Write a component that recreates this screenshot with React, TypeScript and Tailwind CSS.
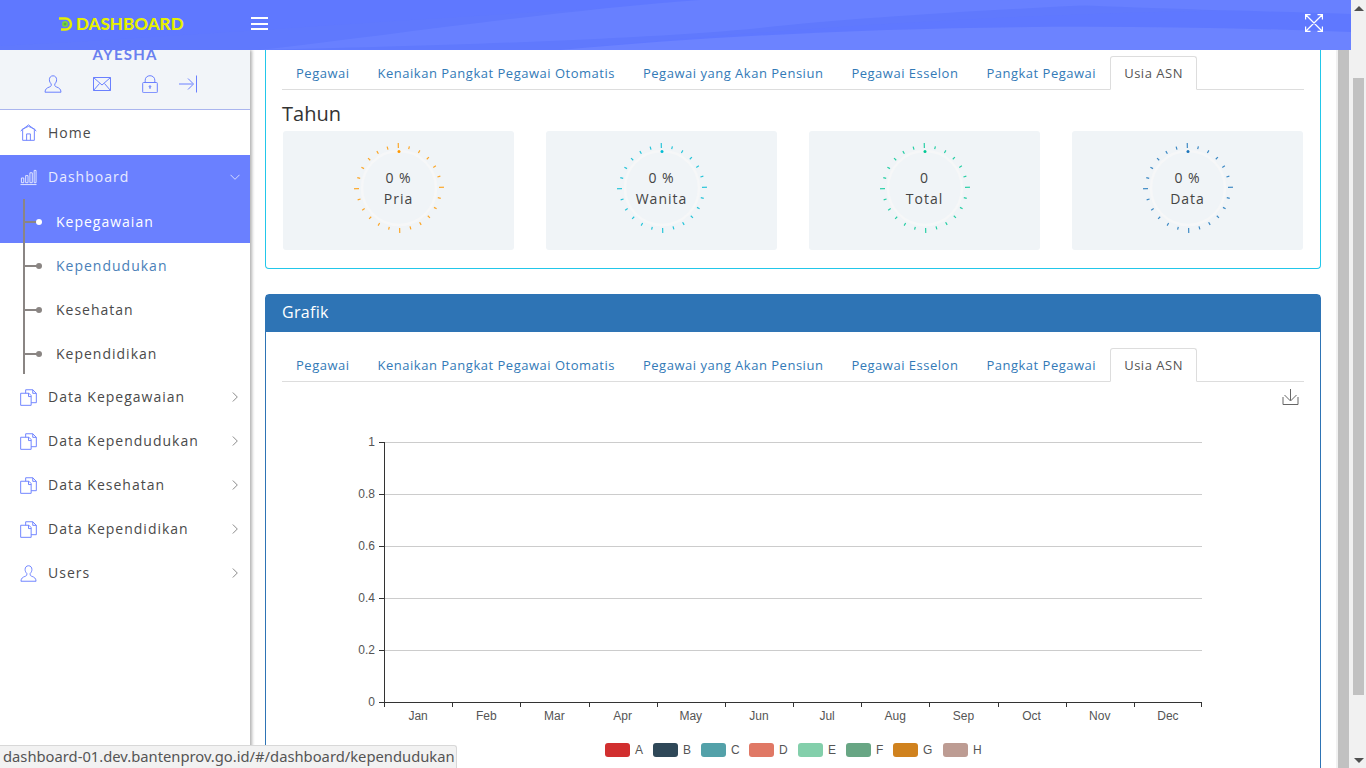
import type { ReactNode } from "react";

const TABS = [
  "Pegawai",
  "Kenaikan Pangkat Pegawai Otomatis",
  "Pegawai yang Akan Pensiun",
  "Pegawai Esselon",
  "Pangkat Pegawai",
  "Usia ASN",
];
const MONTHS = ["Jan", "Feb", "Mar", "Apr", "May", "Jun", "Jul", "Aug", "Sep", "Oct", "Nov", "Dec"];
const LEGEND = [
  { name: "A", x: 605, color: "#d12f2f" },
  { name: "B", x: 653, color: "#2f4858" },
  { name: "C", x: 701, color: "#53a1a9" },
  { name: "D", x: 749, color: "#e07865" },
  { name: "E", x: 798, color: "#83cfab" },
  { name: "F", x: 846, color: "#68a684" },
  { name: "G", x: 893, color: "#d0821e" },
  { name: "H", x: 943, color: "#bd9c93" },
];
const GAUGES = [
  { value: "0 %", label: "Pria", color: "#ff9800" },
  { value: "0 %", label: "Wanita", color: "#00bcd4" },
  { value: "0", label: "Total", color: "#00c896" },
  { value: "0 %", label: "Data", color: "#1b75bb" },
];

function Ico({ children, w = 18, h = 18, color = "#6a80ff", className = "" }: { children: ReactNode; w?: number; h?: number; color?: string; className?: string }) {
  return (
    <svg width={w} height={h} viewBox="0 0 18 18" fill="none" stroke={color} strokeWidth="1" className={`shrink-0 ${className}`}>
      {children}
    </svg>
  );
}

const USER_D = "M9 .8c-2.300 0-3.600 1.700-3.600 3.900 0 1.800.8 3.300 1.800 4.200v1.600c0 .7-.8 1.100-2 1.600-2.200.8-4 1.700-4.200 5.100h16c-.2-3.400-2-4.300-4.200-5.100-1.200-.5-2-.9-2-1.600V8.900c1-.9 1.800-2.400 1.800-4.200C12.600 2.500 11.300.8 9 .8z";
const CHART_D = "M.5 16.500h17M1.500 9.500h2.500v5H1.500zM6 7h2.500v7.500H6zM10.500 4h2.500v10.500h-2.500zM15 1.500h2v13h-2z";

const MailIcon = () => (
  <Ico className="ml-[31px]">
    <path d="M.5 2.500h17v13H.5zM.5 2.500 9 10l8.500-7.500M.5 15.500l6-7M17.500 15.500l-6-7" />
  </Ico>
);
const LockIcon = () => (
  <Ico className="ml-[30px]">
    <path d="M2.500 7.500h13a.8.8 0 0 1 .8.8v8.600a.8.8 0 0 1-.8.8h-13a.8.8 0 0 1-.8-.8V8.300a.8.8 0 0 1 .8-.8zM4.200 7.500V5.200C4.200 2.500 6.300.7 9 .7s4.800 1.800 4.800 4.500v2.300M9 11.500v2.500" />
    <circle cx="9" cy="11.500" r=".8" />
  </Ico>
);
const ExitIcon = () => (
  <Ico className="ml-[20px]">
    <path d="M17.500.5v17M0 9h13.500M9 3.500 14.500 9 9 14.500" />
  </Ico>
);
const HomeIcon = () => (
  <Ico w={17} h={17}>
    <path d="M.7 7.500 9 .9l8.300 6.600M2.800 6.500v10.800h12.400V6.500M7 17.300v-6.800h4v6.800" />
    <path d="M1.800 5.800 9 2.500l7.200 3.300" />
  </Ico>
);
const FilesIcon = () => (
  <Ico w={17} h={17}>
    <path d="M.7 4.500h8.800l2.300 2.500v10.300H.7zM6 4.500V.8h7.500l3.800 3.800v9.900h-5.500M13.500.8v3.800h3.800M9 4.500V8h2.800" />
  </Ico>
);

function Chevron({ down, color = "#8a8a8a" }: { down?: boolean; color?: string }) {
  return (
    <svg width="10" height="10" viewBox="0 0 10 10" fill="none" stroke={color} strokeWidth="1" className="shrink-0">
      <path d={down ? "M.5 2.800 5 7.300l4.500-4.500" : "M2.800.5 7.300 5 2.800 9.500"} />
    </svg>
  );
}

function NavItem({ icon, label, tall, active, chevron }: { icon: ReactNode; label: string; tall?: boolean; active?: boolean; chevron?: boolean }) {
  return (
    <div className={`flex items-center gap-[11px] pl-5 pr-[10px] ${tall ? "h-[45px]" : "h-[44px]"} ${active ? "text-[#e8ebff]" : "text-[#4a4a4a]"}`}>
      {icon}
      <span className={`flex-1 ${tall ? "" : "pb-0.5"}`}>{label}</span>
      {chevron && <Chevron down={active} color={active ? "#d5dbff" : "#8a8a8a"} />}
    </div>
  );
}

function SubItem({ label, className, dot }: { label: string; className: string; dot: string }) {
  return (
    <div className={`relative flex h-[44px] items-center pl-14 ${className}`}>
      <span className="absolute left-[25px] top-[22px] h-0.5 w-[12px] bg-[#8a8583]" />
      <span className={`absolute left-[36px] top-5 size-[6px] rounded-full ${dot}`} />
      {label}
    </div>
  );
}

function Sidebar() {
  return (
    <aside className="relative z-10 w-[250px] shrink-0 bg-white font-['Open_Sans',sans-serif] text-[14px] tracking-[1px] shadow-[2px_0_3px_rgba(0,0,0,0.3)]">
      <div className="flex h-[60px] flex-col border-b border-[#aab5ef] bg-[#f2f5f9]">
        <div className="-mt-1 h-[17px] text-center font-['Lato',sans-serif] text-[15px] font-bold leading-[17px] tracking-[1.2px] text-[#6a80f0]">AYESHA</div>
        <div className="mt-3 flex items-center pl-11">
          <Ico><path d={USER_D} /></Ico>
          <MailIcon />
          <LockIcon />
          <ExitIcon />
        </div>
      </div>
      <NavItem icon={<HomeIcon />} label="Home" tall />
      <div className="bg-[#6a80ff]">
        <NavItem icon={<Ico w={17} h={17} color="#e8ebff"><path d={CHART_D} /></Ico>} label="Dashboard" active chevron />
      </div>
      <div className="relative">
        <span className="absolute left-[23px] top-0 z-10 h-[175px] w-0.5 bg-[#8a8583]" />
        <SubItem label="Kepegawaian" className="bg-[#6a80ff] text-white" dot="bg-white" />
        <SubItem label="Kependudukan" className="text-[#4a80b8]" dot="bg-[#8a8583]" />
        <SubItem label="Kesehatan" className="text-[#4a4a4a]" dot="bg-[#8a8583]" />
        <SubItem label="Kependidikan" className="text-[#4a4a4a]" dot="bg-[#8a8583]" />
      </div>
      <NavItem icon={<FilesIcon />} label="Data Kepegawaian" chevron />
      <NavItem icon={<FilesIcon />} label="Data Kependudukan" chevron />
      <NavItem icon={<FilesIcon />} label="Data Kesehatan" chevron />
      <NavItem icon={<FilesIcon />} label="Data Kependidikan" chevron />
      <NavItem icon={<Ico w={17} h={17}><path d={USER_D} /></Ico>} label="Users" chevron />
    </aside>
  );
}

function Tabs() {
  return (
    <div className="flex h-[34px] border-b border-[#ddd] font-['Open_Sans',sans-serif] text-[13px] tracking-[0.51px]">
      {TABS.map((t) =>
        t === "Usia ASN" ? (
          <div key={t} className="flex h-[34px] items-center rounded-t-[3px] border border-[#ddd] border-b-white bg-white px-[13px] pt-0.5 text-[#555]">
            {t}
          </div>
        ) : (
          <div key={t} className="flex h-[33px] items-center border border-transparent px-[13px] pt-0.5 text-[#337ab7]">
            {t}
          </div>
        ),
      )}
    </div>
  );
}

function Gauge({ value, label, color }: { value: string; label: string; color: string }) {
  const ticks = Array.from({ length: 24 }, (_, i) => i);
  return (
    <div className="flex h-[119px] justify-center rounded-[3px] bg-[#f0f4f7] pt-[7px]">
      <div className="relative size-[100px]">
        <svg width="100" height="100" viewBox="0 0 100 100">
          <circle cx="50" cy="50" r="37" fill="none" stroke="#f6f7f8" strokeWidth="2.500" />
          <circle cx="50" cy="13.500" r="1.500" fill={color} />
          {ticks.map((i) => {
            const major = i % 6 === 0;
            const a = ((i * 15 - 90 - 1) * Math.PI) / 180;
            const r2 = major ? 45 : 43;
            return (
              <line
                key={i}
                x1={50 + 40 * Math.cos(a)}
                y1={50 + 40 * Math.sin(a)}
                x2={50 + r2 * Math.cos(a)}
                y2={50 + r2 * Math.sin(a)}
                stroke={color}
                strokeWidth={major ? 1 : 1.200}
                opacity={major ? 1 : 0.85}
              />
            );
          })}
        </svg>
        <div className="absolute inset-0 flex flex-col items-center justify-center font-['Open_Sans',sans-serif] text-[14px] leading-[21px] tracking-[1px] text-[#444]">
          <span>{value}</span>
          <span>{label}</span>
        </div>
      </div>
    </div>
  );
}

function Chart() {
  const yTicks = ["1", "0.8", "0.6", "0.4", "0.2", "0"];
  const left = 102;
  const right = 920;
  const step = (right - left) / 12;
  return (
    <svg width="1022" height="386" viewBox="0 0 1022 386" className="block font-['Liberation_Sans',sans-serif] text-[12px]">
      <g fill="none" stroke="#666" strokeWidth="1">
        <path d="M1008.500 7v11.500M1002.500 13l6 6 6-6M1001 15v7.500h15V15" />
      </g>
      {yTicks.map((t, i) => {
        const y = 60.500 + i * 52;
        return (
          <g key={t}>
            <line x1={left} x2={right} y1={y} y2={y} stroke={i === 5 ? "#333" : "#ccc"} />
            <line x1={left - 5} x2={left} y1={y} y2={y} stroke="#333" />
            <text x={left - 9} y={y + 3} textAnchor="end" fill="#555">{t}</text>
          </g>
        );
      })}
      <line x1={left + 0.5} x2={left + 0.5} y1={60} y2={320} stroke="#333" />
      {MONTHS.map((m, i) => (
        <g key={m}>
          <line x1={Math.round(left + i * step) + 0.5} x2={Math.round(left + i * step) + 0.5} y1={320} y2={325} stroke="#333" />
          <text x={left + (i + 0.5) * step} y={338} textAnchor="middle" fill="#555">{m}</text>
        </g>
      ))}
      <line x1={right - 0.5} x2={right - 0.5} y1={320} y2={325} stroke="#333" />
      {LEGEND.map((l) => (
        <g key={l.name}>
          <rect x={l.x - 282} y={361} width={25} height={14} rx={3} fill={l.color} />
          <text x={l.x - 282 + 30} y={372} fill="#555">{l.name}</text>
        </g>
      ))}
    </svg>
  );
}

function Waves() {
  return (
    <svg className="absolute inset-0" width="1351" height="50" viewBox="0 0 1351 50" preserveAspectRatio="none">
      <path d="M0 0h1351v50H0z" fill="#5f78ff" />
      <path d="M0 46C300 30 520 8 820 0h531v10C1100 8 800 26 560 50H0z" fill="#6079fd" />
      <path d="M700 0h500c-180 8-330 16-440 28C640 40 420 46 260 50 400 34 560 10 700 0z" fill="#6880ff" />
      <path d="M560 50c220-20 480-30 791-18v18z" fill="#6c83ff" />
      <path d="M1000 0h351v14c-120-4-260-6-351-14z" fill="#6880ff" />
    </svg>
  );
}

function Header() {
  return (
    <header className="relative z-20 flex h-[50px] shrink-0 items-center overflow-hidden pb-[3px]">
      <Waves />
      <div className="relative flex w-[251px] items-center pl-[58px]">
        <svg width="16" height="16" viewBox="0 0 16 16" className="shrink-0">
          <path d="M1 2.500h6.500a5.500 5.500 0 0 1 0 11H3" fill="none" stroke="#e6f000" strokeWidth="2.500" />
          <circle cx="7" cy="8" r="3" fill="#7fd13b" />
          <circle cx="7" cy="8" r="1.500" fill="#4fb34a" />
        </svg>
        <span className="ml-[2px] font-['Lato',sans-serif] text-[17px] font-black leading-none text-[#e6f000]">DASHBOARD</span>
      </div>
      <div className="relative flex w-[17px] flex-col gap-[3.500px]">
        <span className="h-0.5 bg-white" />
        <span className="h-0.5 bg-white" />
        <span className="h-0.5 bg-white" />
      </div>
      <svg className="absolute left-[1305px] top-[14px]" width="18" height="18" viewBox="0 0 18 18" fill="none" stroke="#fff" strokeWidth="1.200">
        <path d="M1 1l16 16M17 1 1 17M.6 5.500V.6h4.900M12.500.6h4.900v4.900M.6 12.500v4.900h4.900M12.500 17.400h4.900v-4.900" />
      </svg>
    </header>
  );
}

function ScrollArrow({ up }: { up?: boolean }) {
  return <span className={`mx-auto size-0 border-x-[5px] border-x-transparent ${up ? "border-b-[5px] border-b-[#505050]" : "border-t-[5px] border-t-[#505050]"}`} />;
}

export default function App() {
  return (
    <div className="relative flex h-screen w-screen overflow-hidden bg-white">
      <div className="flex min-w-0 flex-1 flex-col">
        <Header />
        <div className="flex min-h-0 flex-1">
          <Sidebar />
          <main className="min-w-0 flex-1 overflow-hidden px-[15px]">
            <section className="rounded-b-[4px] border border-t-0 border-[#22c7ea] bg-white px-4 pb-[18px] pt-[6px]">
              <Tabs />
              <h2 className="mt-[10px] h-[31px] font-['Open_Sans',sans-serif] text-[20px] leading-[27px] text-[#333]">Tahun</h2>
              <div className="grid grid-cols-[repeat(4,231px)] gap-[32px] pl-[1px]">
                {GAUGES.map((g) => (
                  <Gauge key={g.label} {...g} />
                ))}
              </div>
            </section>
            <section className="mt-[25px] rounded-t-[4px] border border-[#2e74b5] bg-white">
              <div className="flex h-[37px] items-center bg-[#2e74b5] px-4 pb-[3px] font-['Open_Sans',sans-serif] text-[16px] tracking-[0.3px] text-white">Grafik</div>
              <div className="px-4 pt-4">
                <Tabs />
                <Chart />
              </div>
            </section>
          </main>
          <div className="w-[15px] shrink-0 bg-[#f1f1f1] px-[2px]">
            <div className="h-full w-[11px] bg-[#c1c1c1]" />
          </div>
        </div>
      </div>
      <div className="flex w-[15px] shrink-0 flex-col bg-[#f1f1f1]">
        <div className="flex h-[15px] items-center pt-[2px]"><ScrollArrow up /></div>
        <div className="ml-[2px] mt-[63px] h-[617px] w-[11px] bg-[#c1c1c1]" />
        <div className="mt-auto flex h-[15px] items-center"><ScrollArrow /></div>
      </div>
      <div className="absolute bottom-0 left-0 z-30 flex h-[23px] w-[457px] items-center rounded-tr-[3px] border-r border-t border-[#d8d8d8] bg-[#f2f2f2] pb-0.5 pl-[3px] font-['Noto_Sans',sans-serif] text-[14.75px] text-[#555]">
        dashboard-01.dev.bantenprov.go.id/#/dashboard/kependudukan
      </div>
    </div>
  );
}
